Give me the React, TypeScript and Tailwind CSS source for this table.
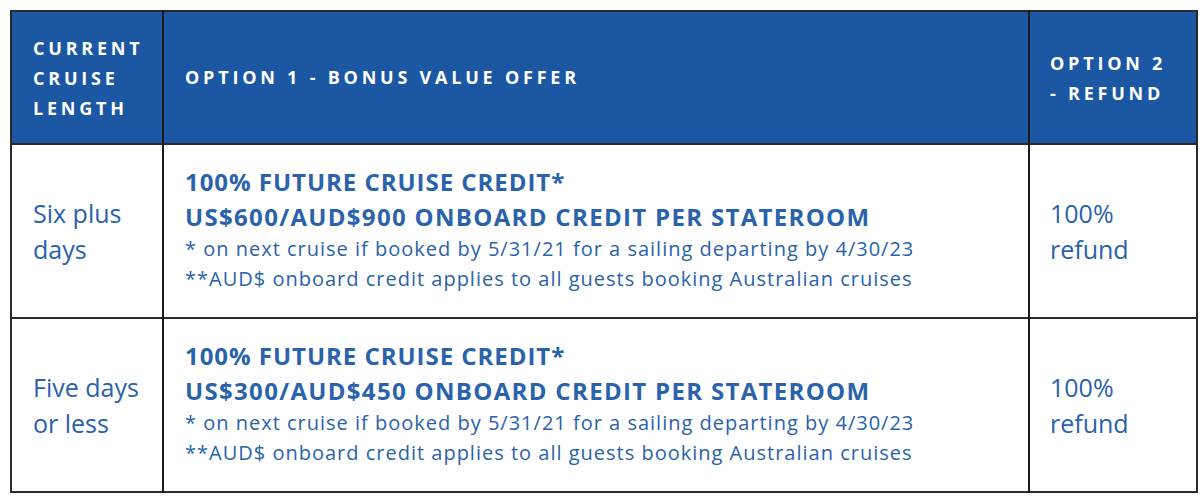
const rows = [
    {
        length: ['Six plus', 'days'],
        credit: 'US$600/AUD$900',
    },
    {
        length: ['Five days', 'or less'],
        credit: 'US$300/AUD$450',
    },
]

export default function App() {
    return (
        <div className="w-[1204px] h-[499px] bg-white pt-[10px] pl-[10px] font-['Open_Sans',sans-serif]">
            <table className="w-[1188px] border-collapse border-2 border-[#2a2a2a]">
                <thead>
                    <tr className="h-[133px] bg-[#1b57a2] text-white font-bold text-[18px] tracking-[0.21em]">
                        <th className="w-[152px] border-r-2 border-[#1a1a1a] pl-[21px] text-left align-middle font-bold leading-[30px]">
                            CURRENT
                            <br />
                            CRUISE
                            <br />
                            LENGTH
                        </th>
                        <th className="w-[866px] border-r-2 border-[#1a1a1a] pl-[21px] text-left align-middle font-bold">
                            OPTION 1 - BONUS VALUE OFFER
                        </th>
                        <th className="pl-[20px] text-left align-middle font-bold leading-[30px]">
                            OPTION 2
                            <br />
                            - REFUND
                        </th>
                    </tr>
                </thead>
                <tbody>
                    {rows.map((row, index) => (
                        <tr
                            key={index}
                            className="h-[174px] border-t-2 border-[#2a2a2a] text-[#2a62ab]"
                        >
                            <td className="border-r-2 border-[#1a1a1a] pl-[21px] align-middle text-[25px] leading-[36px]">
                                {row.length[0]}
                                <br />
                                {row.length[1]}
                            </td>
                            <td className="border-r-2 border-[#1a1a1a] pl-[21px] pb-[4px] align-middle">
                                <div className="font-bold text-[24px] leading-[36px] tracking-[0.04em]">
                                    100% FUTURE CRUISE CREDIT*
                                </div>
                                <div className="font-bold text-[24px] leading-[34px] tracking-[0.055em]">
                                    {row.credit} ONBOARD CREDIT PER STATEROOM
                                </div>
                                <div className="text-[20px] leading-[30px] tracking-[0.05em]">
                                    * on next cruise if booked by 5/31/21 for a sailing departing by 4/30/23
                                </div>
                                <div className="text-[20px] leading-[30px] tracking-[0.05em]">
                                    **AUD$ onboard credit applies to all guests booking Australian cruises
                                </div>
                            </td>
                            <td className="pl-[20px] align-middle text-[25px] leading-[36px]">
                                100%
                                <br />
                                refund
                            </td>
                        </tr>
                    ))}
                </tbody>
            </table>
        </div>
    )
}
